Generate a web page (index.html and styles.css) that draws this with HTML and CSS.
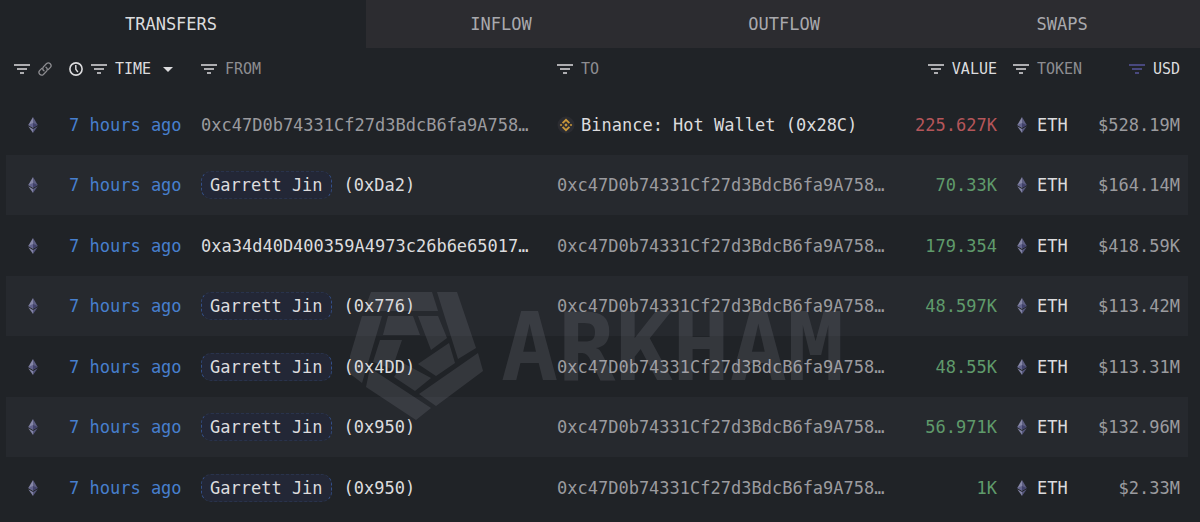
FILE: index.html
```html
<!doctype html>
<html lang="en">
<head>
  <meta charset="utf-8">
  <title>Transfers</title>
  <link rel="stylesheet" href="styles.css">
</head>
<body>
  <svg class="sprite" aria-hidden="true">
    <symbol id="filter" viewBox="0 0 16 10">
      <path d="M0 1h16M3 5h10M6 9h4" fill="none" stroke="currentColor" stroke-width="1.7"/>
    </symbol>
    <symbol id="link" viewBox="0 0 14 14">
      <g fill="none" stroke="currentColor" stroke-width="1.3" stroke-linecap="round">
        <path d="M6 8.8A2.9 2.9 0 0 1 5.4 4.8L8.6 1.6A2.7 2.7 0 0 1 12.4 5.4L10.2 7.6"/>
        <path d="M8 5.2A2.9 2.9 0 0 1 8.6 9.2L5.4 12.4A2.7 2.7 0 0 1 1.6 8.6L3.8 6.4"/>
      </g>
    </symbol>
    <symbol id="clock" viewBox="0 0 14 14">
      <circle cx="7" cy="7" r="6.1" fill="none" stroke="currentColor" stroke-width="1.6"/>
      <path d="M6.8 3v4.2l2.1 3" fill="none" stroke="currentColor" stroke-width="1.4"/>
    </symbol>
    <symbol id="eth" viewBox="0 0 10 16">
      <path d="M5 0L0.3 8 5 10.8z" fill="#8687a8"/>
      <path d="M5 0l4.7 8L5 10.8z" fill="#5d5e82"/>
      <path d="M0.3 8L5 5.9v4.9z" fill="#62638c"/>
      <path d="M9.7 8L5 5.9v4.9z" fill="#41426a"/>
      <path d="M0.3 9.2L5 12v4z" fill="#8182a3"/>
      <path d="M9.7 9.2L5 12v4z" fill="#56577c"/>
    </symbol>
    <symbol id="bnb" viewBox="0 0 18 18">
      <circle cx="9" cy="9" r="8.5" fill="#2b2c31"/>
      <g fill="none" stroke="#c9983a" stroke-width="1.9">
        <path d="M5.6 7.2L9 3.8l3.4 3.4M5.6 10.8L9 14.2l3.4-3.4"/>
      </g>
      <path d="M9 7.3L10.7 9 9 10.7 7.3 9zM4 7.7L5.3 9 4 10.3 2.7 9zM14 7.7L15.3 9 14 10.3 12.7 9z" fill="#c9983a"/>
    </symbol>
  </svg>

  <div class="tabs" role="tablist">
    <button class="tab active" role="tab" aria-selected="true">TRANSFERS</button>
    <button class="tab" role="tab">INFLOW</button>
    <button class="tab" role="tab">OUTFLOW</button>
    <button class="tab" role="tab">SWAPS</button>
  </div>

  <div class="panel">
    <table class="transfers">
      <colgroup>
        <col class="col-chain">
        <col class="col-time">
        <col class="col-from">
        <col class="col-to">
        <col class="col-value">
        <col class="col-token">
        <col class="col-usd">
      </colgroup>
      <thead>
        <tr>
          <th><div class="head first"><svg class="filter"><use href="#filter"/></svg><svg class="small dim"><use href="#link"/></svg></div></th>
          <th><div class="head"><svg class="small"><use href="#clock"/></svg><svg class="filter"><use href="#filter"/></svg>TIME<span class="caret"></span></div></th>
          <th><div class="head"><svg class="filter"><use href="#filter"/></svg><span class="dim">FROM</span></div></th>
          <th><div class="head"><svg class="filter"><use href="#filter"/></svg><span class="dim">TO</span></div></th>
          <th><div class="head right"><svg class="filter"><use href="#filter"/></svg>VALUE</div></th>
          <th><div class="head token-head"><svg class="filter"><use href="#filter"/></svg><span class="dim">TOKEN</span></div></th>
          <th><div class="head right last"><svg class="filter on"><use href="#filter"/></svg>USD</div></th>
        </tr>
      </thead>
      <tbody>
        <tr>
          <td class="chain"><svg class="eth"><use href="#eth"/></svg></td>
          <td><a class="time" href="#">7 hours ago</a></td>
          <td><a class="addr" href="#">0xc47D0b74331Cf27d3BdcB6fa9A758…</a></td>
          <td><a class="named" href="#"><svg class="bnb"><use href="#bnb"/></svg>Binance: Hot Wallet (0x28C)</a></td>
          <td class="num out">225.627K</td>
          <td><a class="token" href="#"><svg class="eth"><use href="#eth"/></svg>ETH</a></td>
          <td class="num usd">$528.19M</td>
        </tr>
        <tr>
          <td class="chain"><svg class="eth"><use href="#eth"/></svg></td>
          <td><a class="time" href="#">7 hours ago</a></td>
          <td><a class="named" href="#"><span class="entity">Garrett Jin</span>(0xDa2)</a></td>
          <td><a class="addr" href="#">0xc47D0b74331Cf27d3BdcB6fa9A758…</a></td>
          <td class="num in">70.33K</td>
          <td><a class="token" href="#"><svg class="eth"><use href="#eth"/></svg>ETH</a></td>
          <td class="num usd">$164.14M</td>
        </tr>
        <tr>
          <td class="chain"><svg class="eth"><use href="#eth"/></svg></td>
          <td><a class="time" href="#">7 hours ago</a></td>
          <td><a class="named" href="#">0xa34d40D400359A4973c26b6e65017…</a></td>
          <td><a class="addr" href="#">0xc47D0b74331Cf27d3BdcB6fa9A758…</a></td>
          <td class="num in">179.354</td>
          <td><a class="token" href="#"><svg class="eth"><use href="#eth"/></svg>ETH</a></td>
          <td class="num usd">$418.59K</td>
        </tr>
        <tr>
          <td class="chain"><svg class="eth"><use href="#eth"/></svg></td>
          <td><a class="time" href="#">7 hours ago</a></td>
          <td><a class="named" href="#"><span class="entity">Garrett Jin</span>(0x776)</a></td>
          <td><a class="addr" href="#">0xc47D0b74331Cf27d3BdcB6fa9A758…</a></td>
          <td class="num in">48.597K</td>
          <td><a class="token" href="#"><svg class="eth"><use href="#eth"/></svg>ETH</a></td>
          <td class="num usd">$113.42M</td>
        </tr>
        <tr>
          <td class="chain"><svg class="eth"><use href="#eth"/></svg></td>
          <td><a class="time" href="#">7 hours ago</a></td>
          <td><a class="named" href="#"><span class="entity">Garrett Jin</span>(0x4DD)</a></td>
          <td><a class="addr" href="#">0xc47D0b74331Cf27d3BdcB6fa9A758…</a></td>
          <td class="num in">48.55K</td>
          <td><a class="token" href="#"><svg class="eth"><use href="#eth"/></svg>ETH</a></td>
          <td class="num usd">$113.31M</td>
        </tr>
        <tr>
          <td class="chain"><svg class="eth"><use href="#eth"/></svg></td>
          <td><a class="time" href="#">7 hours ago</a></td>
          <td><a class="named" href="#"><span class="entity">Garrett Jin</span>(0x950)</a></td>
          <td><a class="addr" href="#">0xc47D0b74331Cf27d3BdcB6fa9A758…</a></td>
          <td class="num in">56.971K</td>
          <td><a class="token" href="#"><svg class="eth"><use href="#eth"/></svg>ETH</a></td>
          <td class="num usd">$132.96M</td>
        </tr>
        <tr>
          <td class="chain"><svg class="eth"><use href="#eth"/></svg></td>
          <td><a class="time" href="#">7 hours ago</a></td>
          <td><a class="named" href="#"><span class="entity">Garrett Jin</span>(0x950)</a></td>
          <td><a class="addr" href="#">0xc47D0b74331Cf27d3BdcB6fa9A758…</a></td>
          <td class="num in">1K</td>
          <td><a class="token" href="#"><svg class="eth"><use href="#eth"/></svg>ETH</a></td>
          <td class="num usd">$2.33M</td>
        </tr>
      </tbody>
    </table>

    <div class="watermark">
      <svg class="mark" viewBox="0 0 136 128" aria-hidden="true">
        <path d="M22 0h61l6 19H15z"/>
        <path d="M88 0h20l19 56-18 11z"/>
        <path d="M13 24h20L13 91 0 81l1-17z"/>
        <path d="M129 61l5 18-47 35-17-12z"/>
        <path d="M21 76l61 40-15 12L17 95z"/>
        <path d="M39 24h25l7 19H34z"/>
        <path d="M69 24h20l9 22-16 12z"/>
        <path d="M31 48h22L43 77l-19-7z"/>
        <path d="M100 51l6 20-19 13-18-12z"/>
        <path d="M54 71l28 15-16 13-21-14z"/>
      </svg>
      <span class="wordmark">ARKHAM</span>
    </div>
  </div>
</body>
</html>
```

FILE: styles.css
```css
* {
  box-sizing: border-box;
}

body {
  margin: 0;
  background: #202327;
  color: #dcdcde;
  font-family: "DejaVu Sans Mono", "Liberation Mono", monospace;
  font-size: 17px;
}

svg {
  display: block;
  flex: none;
}

.sprite {
  display: none;
}

a {
  color: inherit;
  text-decoration: none;
}

/* tabs */

.tabs {
  display: flex;
  height: 48px;
}

.tab {
  flex: 1 1 auto;
  border: 0;
  padding: 0 8px 0 0;
  background: #2c2c30;
  color: #a9a9ad;
  font: inherit;
  cursor: pointer;
}

.tab.active {
  flex: 0 0 366px;
  padding-right: 24px;
  background: #202327;
  color: #dcdcde;
}

/* table */

.panel {
  position: relative;
  padding: 0 12px 0 6px;
}

.transfers {
  width: 100%;
  table-layout: fixed;
  border-collapse: collapse;
}

.col-chain {
  width: 63px;
}

.col-time {
  width: 132px;
}

.col-from {
  width: 356px;
}

.col-value {
  width: 92px;
}

.col-token {
  width: 92px;
}

.col-usd {
  width: 99px;
}

th {
  height: 46px;
  padding: 0 0 4px;
  font-size: 15px;
  font-weight: normal;
  text-align: left;
}

td {
  padding: 0;
  white-space: nowrap;
}

tbody tr {
  height: 61px;
}

tbody tr:nth-child(even) {
  height: 60px;
  background: #26292e;
}

.head {
  display: flex;
  align-items: center;
  gap: 8px;
}

.first {
  padding-left: 8px;
}

.right {
  justify-content: flex-end;
}

.last {
  padding-right: 8px;
}

.token-head {
  padding-left: 16px;
}

.dim {
  color: #8d8d91;
}

.filter {
  width: 16px;
  height: 10px;
}

.on {
  color: #55569c;
}

.small {
  width: 14px;
  height: 14px;
}

.caret {
  margin-left: 4px;
  border: 5px solid transparent;
  border-top-color: currentColor;
  border-bottom: 0;
}

.chain {
  padding-left: 22px;
}

.eth {
  width: 10px;
  height: 16px;
}

.bnb {
  width: 18px;
  height: 18px;
  margin-right: 6px;
}

.time {
  color: #477fcd;
}

.addr,
.usd {
  color: #9b9b9f;
}

.named,
.token {
  display: flex;
  align-items: center;
}

.entity {
  margin-right: 12px;
  padding: 3px 8px;
  border: 1px dashed #34508a;
  border-top-color: #29334c;
  border-bottom-color: #29334c;
  border-radius: 10px;
  background: #232736;
}

.num {
  text-align: right;
}

.in {
  color: #5f9a6b;
}

.out {
  color: #b5565a;
}

.usd {
  padding-right: 8px;
}

.token {
  gap: 10px;
  padding-left: 20px;
}

/* watermark */

.watermark {
  position: absolute;
  top: 244px;
  left: 349px;
  display: flex;
  gap: 16px;
  opacity: 0.12;
  pointer-events: none;
}

.mark {
  width: 136px;
  height: 128px;
  fill: #c4c4d4;
}

.wordmark {
  color: #c4c4d4;
  font-size: 95px;
  font-weight: bold;
}
```
